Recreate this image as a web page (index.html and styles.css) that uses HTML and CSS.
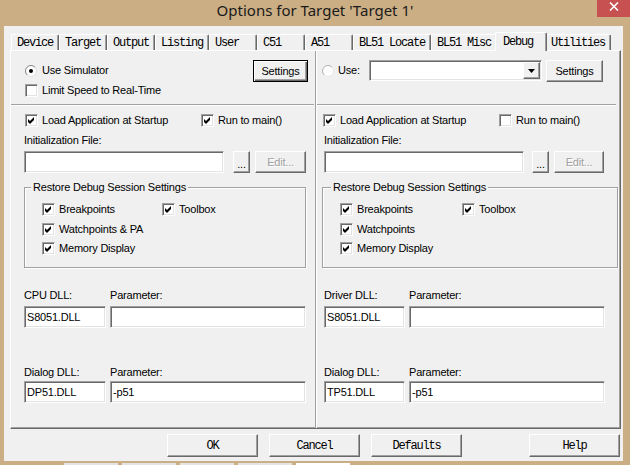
FILE: index.html
```html
<!DOCTYPE html>
<html lang="en">
<head>
    <meta charset="UTF-8">
    <title>Options for Target 'Target 1'</title>
    <link rel="stylesheet" href="styles.css">
</head>
<body>
    <div class="window">
        <div class="titlebar">
            <span class="title">Options for Target 'Target 1'</span>
            <span class="close">
                <svg width="10" height="9" viewBox="0 0 10 9"><path d="M1 0.5l8 8M9 0.5l-8 8" stroke="#fff" stroke-width="1.6"/></svg>
            </span>
        </div>

        <div class="frame">
            <div class="client">
                <div class="tabs">
                    <span class="tab">Device</span>
                    <span class="tab">Target</span>
                    <span class="tab">Output</span>
                    <span class="tab">Listing</span>
                    <span class="tab">User</span>
                    <span class="tab">C51</span>
                    <span class="tab">A51</span>
                    <span class="tab">BL51 Locate</span>
                    <span class="tab">BL51 Misc</span>
                    <span class="tab active">Debug</span>
                    <span class="tab">Utilities</span>
                </div>

                <div class="panel">
                    <!-- simulator side -->
                    <div class="col col-sim">
                        <div class="row-top">
                            <div class="opt opt-radio">
                                <svg class="radio" viewBox="0 0 12 12"><circle cx="6" cy="6" r="5.5" fill="#fff" stroke="#dcdcdc"/><path d="M2.1 9.9A5.5 5.5 0 0 1 9.9 2.1" fill="none" stroke="#8a8a8a"/><circle cx="6" cy="6" r="2"/></svg>
                                Use Simulator
                            </div>
                            <span class="btn btn-default btn-settings">Settings</span>
                        </div>
                        <div class="opt opt-limit">
                            <span class="check"></span>Limit Speed to Real-Time
                        </div>
                        <div class="sep"></div>
                        <div class="row-load">
                            <div class="opt opt-load">
                                <span class="check"><svg viewBox="0 0 11 11"><path d="M2 4l2 2 4-4v3l-4 4-2-2z"/></svg></span>Load Application at Startup
                            </div>
                            <div class="opt">
                                <span class="check"><svg viewBox="0 0 11 11"><path d="M2 4l2 2 4-4v3l-4 4-2-2z"/></svg></span>Run to main()
                            </div>
                        </div>
                        <div class="label lbl-init">Initialization File:</div>
                        <div class="file-row">
                            <span class="field field-init"></span>
                            <span class="btn btn-dots">...</span>
                            <span class="btn btn-edit">Edit...</span>
                        </div>
                        <div class="group">
                            <div class="group-title">Restore Debug Session Settings</div>
                            <div class="group-row">
                                <div class="opt opt-first">
                                    <span class="check"><svg viewBox="0 0 11 11"><path d="M2 4l2 2 4-4v3l-4 4-2-2z"/></svg></span>Breakpoints
                                </div>
                                <div class="opt">
                                    <span class="check"><svg viewBox="0 0 11 11"><path d="M2 4l2 2 4-4v3l-4 4-2-2z"/></svg></span>Toolbox
                                </div>
                            </div>
                            <div class="opt opt-watch">
                                <span class="check"><svg viewBox="0 0 11 11"><path d="M2 4l2 2 4-4v3l-4 4-2-2z"/></svg></span>Watchpoints &amp; PA
                            </div>
                            <div class="opt opt-mem">
                                <span class="check"><svg viewBox="0 0 11 11"><path d="M2 4l2 2 4-4v3l-4 4-2-2z"/></svg></span>Memory Display
                            </div>
                        </div>
                        <div class="dll-labels">
                            <span class="dll-name">CPU DLL:</span><span>Parameter:</span>
                        </div>
                        <div class="dll-row">
                            <span class="field field-dll">S8051.DLL</span>
                            <span class="field field-param"></span>
                        </div>
                        <div class="dll-labels dll-second">
                            <span class="dll-name">Dialog DLL:</span><span>Parameter:</span>
                        </div>
                        <div class="dll-row dll-row-second">
                            <span class="field field-dll">DP51.DLL</span>
                            <span class="field field-param">-p51</span>
                        </div>
                    </div>

                    <!-- target driver side -->
                    <div class="col col-hw">
                        <div class="row-top">
                            <div class="opt opt-radio">
                                <svg class="radio" viewBox="0 0 12 12"><circle cx="6" cy="6" r="5.5" fill="#fff" stroke="#e6e6e6"/><path d="M2.1 9.9A5.5 5.5 0 0 1 9.9 2.1" fill="none" stroke="#b4b4b4"/></svg>
                                Use:
                            </div>
                            <span class="combo">
                                <span class="btn combo-arrow"><svg width="7" height="4" viewBox="0 0 7 4"><path d="M0 0h7L3.5 4z"/></svg></span>
                            </span>
                            <span class="btn btn-settings">Settings</span>
                        </div>
                        <div class="sep"></div>
                        <div class="row-load">
                            <div class="opt opt-load">
                                <span class="check"><svg viewBox="0 0 11 11"><path d="M2 4l2 2 4-4v3l-4 4-2-2z"/></svg></span>Load Application at Startup
                            </div>
                            <div class="opt">
                                <span class="check"></span>Run to main()
                            </div>
                        </div>
                        <div class="label lbl-init">Initialization File:</div>
                        <div class="file-row">
                            <span class="field field-init"></span>
                            <span class="btn btn-dots">...</span>
                            <span class="btn btn-edit">Edit...</span>
                        </div>
                        <div class="group">
                            <div class="group-title">Restore Debug Session Settings</div>
                            <div class="group-row">
                                <div class="opt opt-first">
                                    <span class="check"><svg viewBox="0 0 11 11"><path d="M2 4l2 2 4-4v3l-4 4-2-2z"/></svg></span>Breakpoints
                                </div>
                                <div class="opt">
                                    <span class="check"><svg viewBox="0 0 11 11"><path d="M2 4l2 2 4-4v3l-4 4-2-2z"/></svg></span>Toolbox
                                </div>
                            </div>
                            <div class="opt opt-watch">
                                <span class="check"><svg viewBox="0 0 11 11"><path d="M2 4l2 2 4-4v3l-4 4-2-2z"/></svg></span>Watchpoints
                            </div>
                            <div class="opt opt-mem">
                                <span class="check"><svg viewBox="0 0 11 11"><path d="M2 4l2 2 4-4v3l-4 4-2-2z"/></svg></span>Memory Display
                            </div>
                        </div>
                        <div class="dll-labels">
                            <span class="dll-name">Driver DLL:</span><span>Parameter:</span>
                        </div>
                        <div class="dll-row">
                            <span class="field field-dll">S8051.DLL</span>
                            <span class="field field-param"></span>
                        </div>
                        <div class="dll-labels dll-second">
                            <span class="dll-name">Dialog DLL:</span><span>Parameter:</span>
                        </div>
                        <div class="dll-row dll-row-second">
                            <span class="field field-dll">TP51.DLL</span>
                            <span class="field field-param">-p51</span>
                        </div>
                    </div>
                </div>

                <div class="buttons">
                    <span class="btn btn-dlg">OK</span>
                    <span class="btn btn-dlg">Cancel</span>
                    <span class="btn btn-dlg">Defaults</span>
                    <span class="btn btn-dlg btn-help">Help</span>
                </div>
            </div>
        </div>

        <div class="under">
            <span></span><span></span><span></span><span></span><span class="under-on"></span>
        </div>
    </div>
</body>
</html>
```

FILE: styles.css
```css
* {
    box-sizing: border-box;
}
body {
    margin: 0;
    background: #cbae84;
    font-family: "Liberation Sans", Arial, sans-serif;
    font-size: 11px;
    letter-spacing: -0.2px;
    color: #000;
}
.window {
    position: relative;
    width: 630px;
    height: 465px;
    background: #cbae84;
    overflow: hidden;
}

/* title bar */
.titlebar {
    height: 26px;
    text-align: center;
}
.title {
    font-family: "Noto Sans", "Open Sans", sans-serif;
    font-size: 15px;
    line-height: 21px;
    letter-spacing: 0;
    color: #1a1a1a;
}
.close {
    position: absolute;
    top: 0;
    right: 0;
    width: 33px;
    height: 17px;
    padding-top: 2px;
    background: #c75050;
    display: flex;
    justify-content: center;
    align-items: flex-start;
}

.frame {
    padding: 0 7px 0 4px;
}
.client {
    height: 435px;
    padding-top: 6px;
    background: #f0f0f0;
}

/* tab strip */
.tabs {
    display: flex;
    align-items: flex-end;
    height: 18px;
    padding-left: 7px;
}
.tab {
    min-width: 48px;
    height: 16px;
    padding: 0 5px;
    border: 1px solid;
    border-color: #fff #696969 transparent #fff;
    border-bottom: none;
    border-radius: 2px 2px 0 0;
    box-shadow: inset -1px 0 #a0a0a0;
    font-family: "Liberation Mono", "Courier New", monospace;
    font-size: 12px;
    letter-spacing: -1.2px;
    line-height: 17px;
    white-space: pre;
}
.tab.active {
    position: relative;
    z-index: 1;
    min-width: 52px;
    height: 19px;
    margin: 0 -2px -1px;
    padding: 0 7px;
    background: #f0f0f0;
    line-height: 18px;
}

/* page frame */
.panel {
    display: flex;
    width: 611px;
    height: 379px;
    margin-left: 6px;
    border: 1px solid;
    border-color: #fff #696969 #696969 #fff;
    box-shadow: inset -1px -1px #a0a0a0;
}
.col {
    display: flex;
    flex-direction: column;
}
.col-sim {
    width: 305px;
    padding: 0 7px 0 13px;
    border-right: 1px solid #a0a0a0;
}
.col-hw {
    flex: 1;
    padding: 0 2px 0 7px;
    border-left: 1px solid #fff;
}

/* options */
.opt {
    display: flex;
    align-items: center;
    height: 13px;
    line-height: 13px;
    white-space: nowrap;
}
.check {
    flex: none;
    width: 13px;
    height: 13px;
    margin-right: 4px;
    background: #fff;
    border: 1px solid;
    border-color: #a0a0a0 #fff #fff #a0a0a0;
    box-shadow: inset 1px 1px #696969, inset -1px -1px #e3e3e3;
}
.check svg {
    display: block;
    width: 11px;
    height: 11px;
}
.radio {
    flex: none;
    width: 12px;
    height: 12px;
    margin-right: 5px;
}

.row-top {
    display: flex;
    align-items: flex-start;
    height: 22px;
    margin-top: 9px;
}
.opt-radio {
    margin-top: 4px;
}
.col-sim .opt-radio {
    margin-left: 1px;
}
.col-hw .opt-radio {
    width: 47px;
    margin-left: -2px;
}
.col-hw .radio {
    margin-right: 4px;
}

.opt-limit {
    margin: 2px 0 0 1px;
}
.sep {
    height: 2px;
    border-top: 1px solid #a0a0a0;
    border-bottom: 1px solid #fff;
}
.col-sim .sep {
    margin: 7px -6px 0 -13px;
}
.col-hw .sep {
    margin: 22px 2px 0 -7px;
}

.row-load {
    display: flex;
    margin-top: 8px;
}
.col-sim .row-load {
    margin-left: 1px;
}
.col-hw .row-load {
    margin-left: -1px;
}
.opt-load {
    width: 176px;
}

.label {
    line-height: 13px;
}
.lbl-init {
    margin-top: 7px;
}

/* buttons and fields */
.btn {
    display: flex;
    align-items: center;
    justify-content: center;
    flex: none;
    height: 22px;
    background: #f0f0f0;
    border: 1px solid;
    border-color: #fff #696969 #696969 #fff;
    box-shadow: inset -1px -1px #a0a0a0;
    white-space: nowrap;
}
.btn-default {
    border-color: #000;
    box-shadow: inset 1px 1px #fff, inset -1px -1px #696969, inset -2px -2px #a0a0a0;
}
.btn-settings {
    width: 57px;
}
.col-sim .btn-settings {
    width: 55px;
    margin-left: auto;
}
.col-hw .btn-settings {
    margin-left: 4px;
}
.field {
    display: block;
    flex: none;
    height: 22px;
    padding: 0 2px;
    background: #fff;
    border: 1px solid;
    border-color: #a0a0a0 #fff #fff #a0a0a0;
    box-shadow: inset 1px 1px #696969, inset -1px -1px #e3e3e3;
    line-height: 20px;
}
.combo {
    display: flex;
    justify-content: flex-end;
    width: 173px;
    height: 21px;
    padding: 1px;
    background: #fff;
    border: 1px solid;
    border-color: #a0a0a0 #fff #fff #a0a0a0;
    box-shadow: inset 1px 1px #696969, inset -1px -1px #e3e3e3;
}
.combo-arrow {
    width: 17px;
    height: 17px;
}

.file-row {
    display: flex;
    margin-top: 4px;
}
.field-init {
    width: 200px;
}
.btn-dots {
    width: 17px;
    margin-left: 9px;
    padding-top: 4px;
}
.btn-edit {
    width: 51px;
    margin-left: 5px;
    color: #a0a0a0;
    text-shadow: 1px 1px #fff;
}
.col-hw .btn-dots {
    margin-left: 8px;
}
.col-hw .btn-edit {
    width: 50px;
}

/* group box */
.group {
    width: 282px;
    margin-top: 14px;
    padding: 0 0 12px 17px;
    border: 1px solid #a0a0a0;
    box-shadow: inset 1px 1px #fff, 1px 1px #fff;
}
.col-hw .group {
    width: 296px;
    margin-left: -2px;
}
.group-title {
    display: table;
    margin: -7px 0 0 -11px;
    padding: 0 2px;
    background: #f0f0f0;
    line-height: 13px;
}
.col-hw .group-title {
    margin-left: -9px;
}
.group-row {
    display: flex;
    margin-top: 9px;
}
.opt-first {
    width: 120px;
}
.col-hw .opt-first {
    width: 122px;
}
.opt-watch {
    margin-top: 7px;
}
.opt-mem {
    margin-top: 6px;
}

/* dll settings */
.dll-labels {
    display: flex;
    margin-top: 21px;
    line-height: 13px;
}
.dll-second {
    margin-top: 38px;
}
.dll-name {
    width: 86px;
}
.col-hw .dll-name {
    width: 85px;
}
.dll-row {
    display: flex;
    margin-top: 4px;
}
.dll-row-second {
    margin-top: 2px;
}
.field-dll {
    width: 82px;
    margin-right: 4px;
}
.col-hw .field-dll {
    width: 81px;
}
.field-param {
    width: 196px;
}

/* dialog buttons */
.buttons {
    display: flex;
    margin-top: 5px;
    padding-left: 163px;
}
.btn-dlg {
    width: 91px;
    height: 23px;
    margin-right: 11px;
    font-family: "Liberation Mono", "Courier New", monospace;
    font-size: 12px;
    letter-spacing: -1.2px;
}
.btn-help {
    margin-left: 56px;
}

/* edge of the window behind */
.under {
    display: flex;
    gap: 4px;
    height: 4px;
    padding: 2px 0 0 64px;
}
.under span {
    width: 54px;
    background: #e4e4e4;
}
.under .under-on {
    background: #fff;
}
```
